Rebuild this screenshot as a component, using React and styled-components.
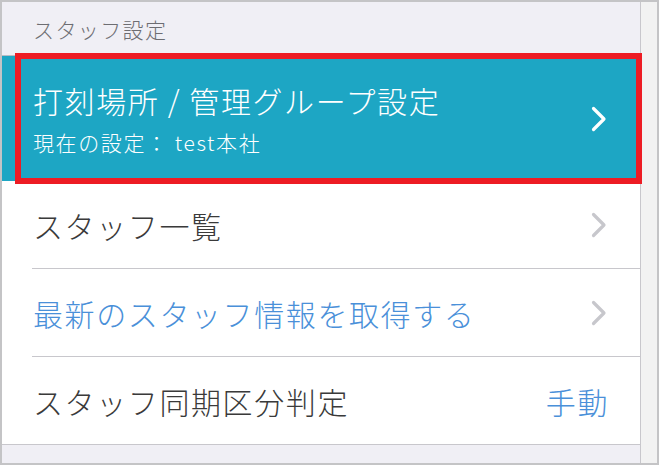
import React from 'react';
import styled, { createGlobalStyle } from 'styled-components';

const GlobalStyle = createGlobalStyle`
  html, body {
    margin: 0;
    padding: 0;
    background: #ffffff;
  }
  body {
    font-family: "Noto Sans CJK JP", "Noto Sans", sans-serif;
  }
`;

const Frame = styled.div`
  width: 659px;
  height: 465px;
  box-sizing: border-box;
  border: 2px solid #c4c4c6;
  display: flex;
  overflow: hidden;
`;

const Main = styled.div`
  flex: 1;
  display: flex;
  flex-direction: column;
  background: #ffffff;
  position: relative;
  z-index: 1;
`;

const ScrollTrack = styled.div`
  width: 16px;
  border-left: 1px solid #c8c7cc;
  background: #f2f2f2;
`;

const SectionHeader = styled.div`
  height: 54px;
  box-sizing: border-box;
  border-bottom: 1px solid #b9bcc4;
  background: #f0eff5;
  padding-left: 31px;
  display: flex;
  align-items: center;
  font-size: 21px;
  font-weight: 300;
  letter-spacing: 1.4px;
  color: #6d6d72;
`;

const SelectedRow = styled.div`
  position: relative;
  height: 125px;
  background: #1da6c4;
  display: flex;
  align-items: center;
  padding: 0 33px 0 31px;
  color: #ffffff;
`;

const Highlight = styled.div`
  position: absolute;
  top: -3px;
  bottom: -3px;
  left: 13px;
  right: -2px;
  border: 6px solid #ed1c24;
  pointer-events: none;
`;

const Texts = styled.div`
  flex: 1;
  display: flex;
  flex-direction: column;
`;

const Title = styled.div`
  font-size: 30px;
  font-weight: 300;
  letter-spacing: 1.6px;
  line-height: 40px;
  margin-top: -2px;
`;

const Subtitle = styled.div`
  font-size: 21px;
  font-weight: 300;
  letter-spacing: 1.6px;
  line-height: 28px;
  margin-top: 8px;
`;

const Row = styled.div`
  display: flex;
  padding-left: 30px;
`;

const RowBody = styled.div`
  flex: 1;
  height: 87px;
  display: flex;
  align-items: center;
  padding-right: 33px;
  border-bottom: 1px solid #c8c7cc;
  margin-left: ${({ $fullLine }) => ($fullLine ? '-30px' : '0')};
  padding-left: ${({ $fullLine }) => ($fullLine ? '31px' : '1px')};
`;

const Label = styled.div`
  flex: 1;
  font-size: 30px;
  font-weight: 300;
  letter-spacing: 1.6px;
  color: ${({ $link }) => ($link ? '#4a90d9' : '#3a3a3a')};
`;

const Value = styled.div`
  font-size: 30px;
  font-weight: 300;
  letter-spacing: 1.6px;
  margin-right: -2px;
  color: #4a90d9;
`;

const Footer = styled.div`
  flex: 1;
  background: #f0eff5;
`;

const Chevron = ({ color }) => (
  <svg width="16" height="26" viewBox="0 0 16 26" fill="none">
    <polyline
      points="2.5,2.5 13,13 2.5,23.5"
      stroke={color}
      strokeWidth="3.2"
      strokeLinecap="round"
      strokeLinejoin="round"
    />
  </svg>
);

const rows = [
  { label: 'スタッフ一覧', chevron: true },
  { label: '最新のスタッフ情報を取得する', chevron: true, link: true },
  { label: 'スタッフ同期区分判定', value: '手動', last: true },
];

export default function App() {
  return (
    <>
      <GlobalStyle />
      <Frame>
        <Main>
          <SectionHeader>スタッフ設定</SectionHeader>
          <SelectedRow>
            <Texts>
              <Title>打刻場所 / 管理グループ設定</Title>
              <Subtitle>現在の設定： test本社</Subtitle>
            </Texts>
            <Chevron color="#ffffff" />
            <Highlight />
          </SelectedRow>
          {rows.map((row) => (
            <Row key={row.label}>
              <RowBody $fullLine={row.last}>
                <Label $link={row.link}>{row.label}</Label>
                {row.value && <Value>{row.value}</Value>}
                {row.chevron && <Chevron color="#c7c7cc" />}
              </RowBody>
            </Row>
          ))}
          <Footer />
        </Main>
        <ScrollTrack />
      </Frame>
    </>
  );
}
